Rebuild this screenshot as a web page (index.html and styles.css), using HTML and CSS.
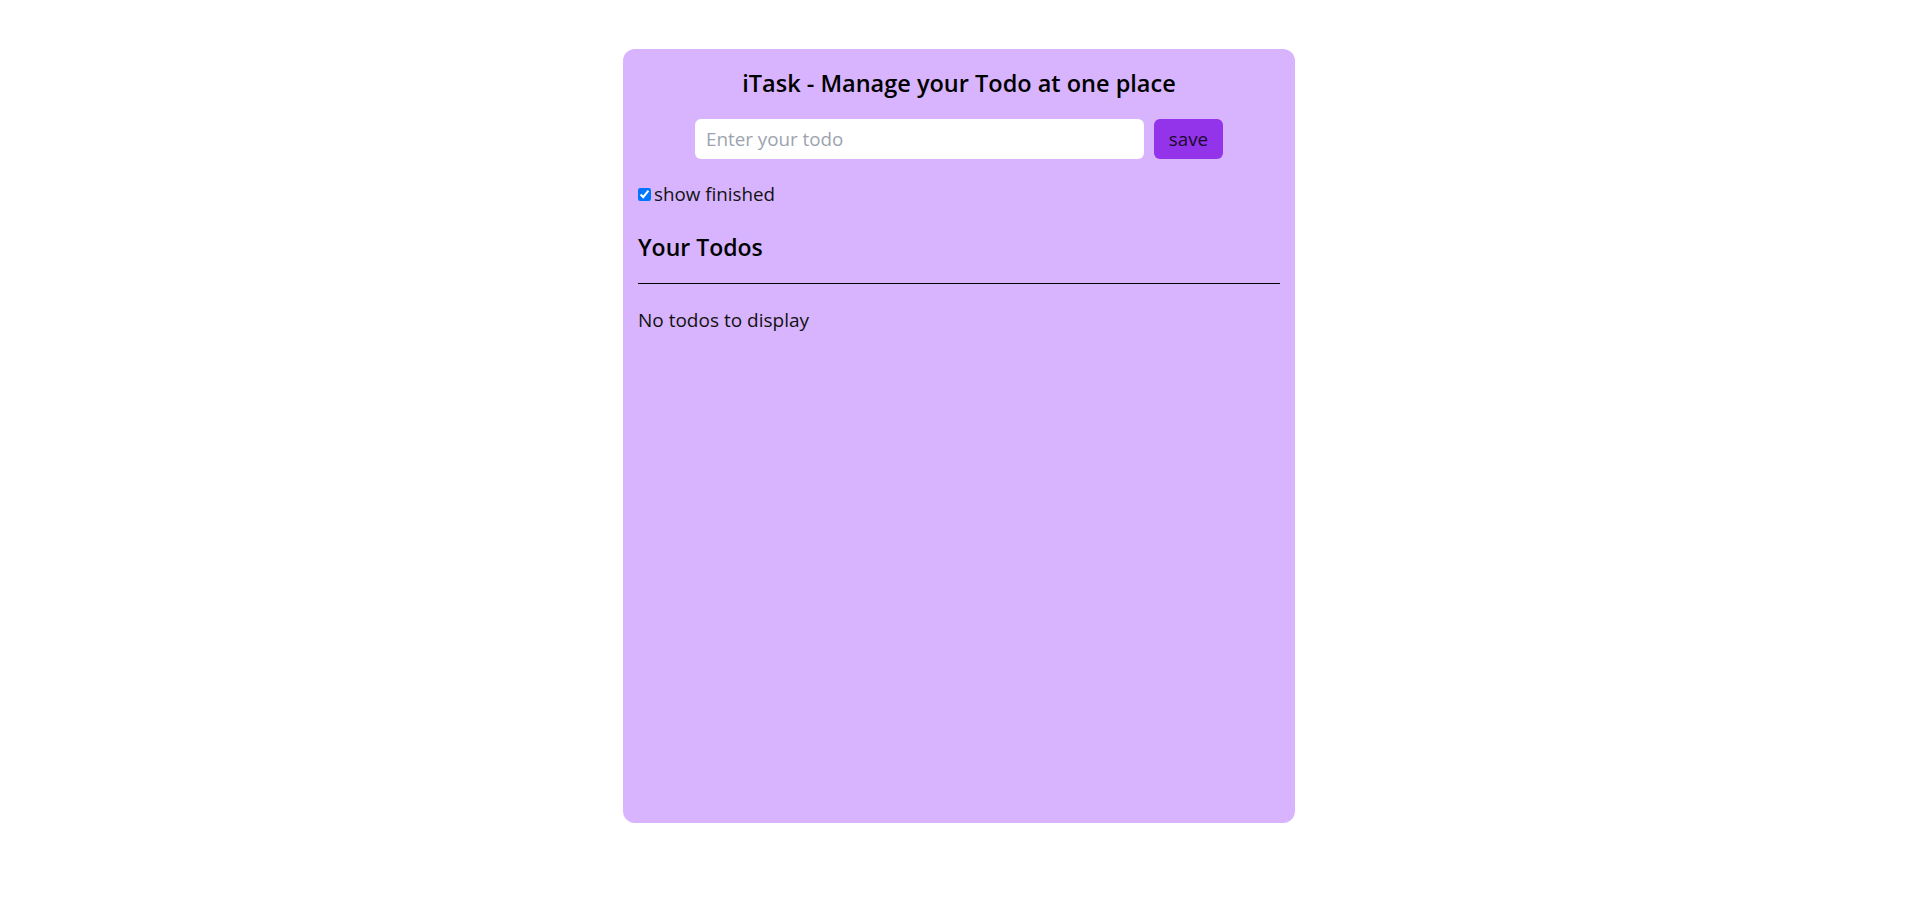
FILE: index.html
```html
<!DOCTYPE html>
<html lang="en">
<head>
<meta charset="utf-8">
<title>iTask</title>
<link rel="stylesheet" href="styles.css">
</head>
<body>
<main class="card">
  <h1 class="title">iTask - Manage your Todo at one place</h1>
  <div class="add-row">
    <input class="todo-input" type="text" placeholder="Enter your todo">
    <button class="save-btn">save</button>
  </div>
  <label class="show-finished">
    <input class="check" type="checkbox" checked>
    <span>show finished</span>
  </label>
  <h2 class="subtitle">Your Todos</h2>
  <div class="divider"></div>
  <p class="empty">No todos to display</p>
</main>
</body>
</html>
```

FILE: styles.css
```css
html, body {
  margin: 0;
  padding: 0;
  background: #ffffff;
}

body {
  font-family: "Open Sans", "Noto Sans", sans-serif;
  color: #111;
}

.card {
  box-sizing: border-box;
  width: 672px;
  min-height: 774px;
  margin: 49px auto 0;
  padding: 15px;
  background: #d8b4fe;
  border-radius: 12px;
  display: flex;
  flex-direction: column;
}

.title {
  margin: 0;
  font-size: 23.5px;
  font-weight: 600;
  line-height: 38px;
  text-align: center;
  color: #000;
}

.add-row {
  margin-top: 17px;
  display: flex;
  justify-content: center;
  gap: 10px;
}

.todo-input {
  box-sizing: border-box;
  width: 449px;
  height: 40px;
  border: none;
  outline: none;
  border-radius: 6px;
  background: #fff;
  padding: 0 11px;
  font-family: inherit;
  font-size: 18.8px;
  color: #111;
}

.todo-input::placeholder {
  color: #9ca3af;
}

.save-btn {
  box-sizing: border-box;
  width: 69px;
  height: 40px;
  border: none;
  border-radius: 6px;
  background: #9333ea;
  font-family: inherit;
  font-size: 18.8px;
  color: #1a0a2a;
  padding: 0;
  cursor: pointer;
}

.show-finished {
  margin-top: 22px;
  display: flex;
  align-items: center;
  font-size: 18.8px;
  line-height: 26px;
  color: #111;
}

.check {
  width: 13px;
  height: 13px;
  margin: 0 3px 0 0;
  accent-color: #0075ff;
}

.subtitle {
  margin: 24px 0 0;
  font-size: 23px;
  font-weight: 600;
  line-height: 32px;
  color: #000;
}

.divider {
  margin-top: 20px;
  height: 1px;
  background: #000;
}

.empty {
  margin: 23px 0 0;
  font-size: 19px;
  line-height: 26px;
  color: #111;
}
```
